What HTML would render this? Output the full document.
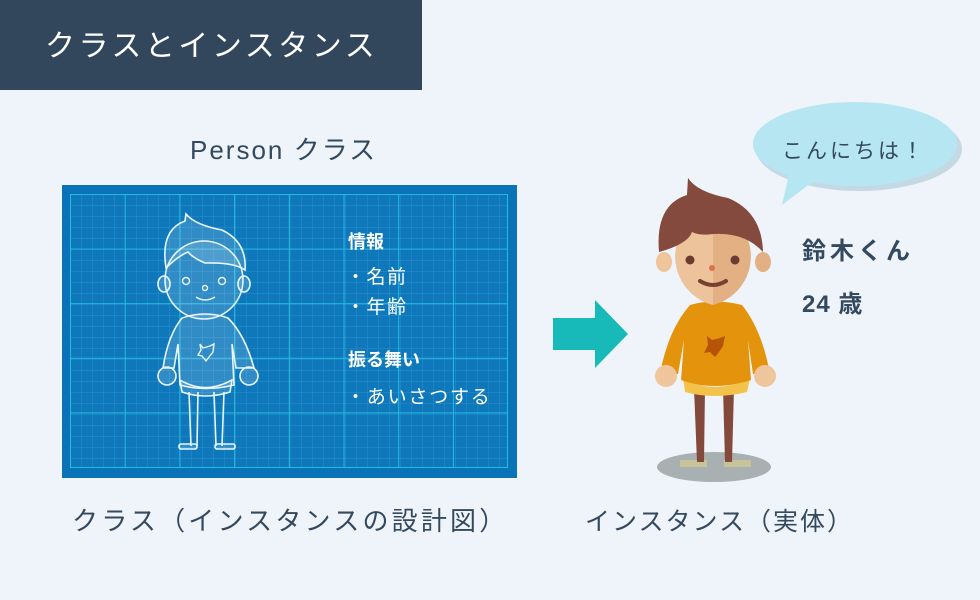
<!DOCTYPE html>
<html><head><meta charset="utf-8"><style>
body{margin:0;width:980px;height:600px;background:#eff4fb;overflow:hidden;font-family:"Liberation Sans","Noto Sans CJK JP",sans-serif;}
</style></head><body>
<svg width="980" height="600" xmlns="http://www.w3.org/2000/svg" style="position:absolute;left:0;top:0">
<defs>
<pattern id="minor" x="70" y="194" width="11" height="11" patternUnits="userSpaceOnUse"><path d="M0 0V11M0 0H11" stroke="#2a8fcf" stroke-width="1" fill="none"/></pattern>
<pattern id="major" x="70" y="194" width="54.7" height="54.6" patternUnits="userSpaceOnUse"><path d="M0.5 0V55M0 0.5H55" stroke="#22bde0" stroke-width="1" fill="none"/></pattern>
</defs>
<rect x="0" y="0" width="422" height="90" fill="#33475c"/>
<text x="45" y="56" fill="#fff" font-size="30" letter-spacing="3.5" font-family="Liberation Sans,Noto Sans CJK JP,sans-serif">クラスとインスタンス</text>
<text x="190" y="159" fill="#34495e" font-size="26" letter-spacing="2" font-family="Liberation Sans,Noto Sans CJK JP,sans-serif">Person クラス</text>
<rect x="62" y="185" width="455" height="293" fill="#0a72b6"/>
<rect x="70" y="194" width="438" height="273" fill="#0e78bb"/>
<rect x="70" y="194" width="438" height="273" fill="url(#minor)"/>
<rect x="70" y="194" width="438" height="273" fill="url(#major)"/>
<rect x="70.5" y="194.5" width="437" height="273" fill="none" stroke="#22bde0"/>
<g stroke="#e8f6ff" stroke-width="1.6" fill="rgba(255,255,255,0.15)">
<line x1="189" y1="392" x2="191" y2="446"/><line x1="198" y1="392" x2="197" y2="446"/>
<line x1="214" y1="392" x2="216" y2="446"/><line x1="224" y1="392" x2="222" y2="446"/>
<rect x="179" y="444" width="18" height="5" rx="2"/><rect x="215" y="444" width="20" height="5" rx="2"/>
<path d="M180 380 Q205 395 232 380 L230 392 Q205 400 182 392Z"/>
<path d="M182 318 Q205 310 228 318 Q245 335 254 368 L236 368 L232 344 L234 385 Q205 392 180 385 L178 344 L174 368 L163 368 Q168 335 182 318Z"/>
<circle cx="167" cy="376" r="9"/><circle cx="249" cy="376" r="9"/>
<ellipse cx="164" cy="284" rx="6" ry="8"/><ellipse cx="244" cy="284" rx="6" ry="8"/>
<circle cx="204" cy="280" r="39"/>
<path d="M166 268 Q160 230 185 221 L186 214 Q195 225 222 230 Q247 242 245 270 Q234 262 205 263 Q193 258 188 252 Q178 256 166 268Z"/>
</g>
<g stroke="#e8f6ff" stroke-width="1.4" fill="none">
<circle cx="186" cy="281" r="3.5"/><circle cx="222" cy="281" r="3.5"/><circle cx="205" cy="288" r="2.5"/>
<path d="M196 297 Q205 303 215 297"/>
<path d="M200 344 L203 348 L210 346 L214 344 L213 352 L209 357 L206 361 L202 356 L198 355 L201 350Z"/>
</g>
<g fill="#fff" font-family="Liberation Sans,Noto Sans CJK JP,sans-serif">
<text x="348" y="248" font-size="18" font-weight="bold">情報</text>
<text x="346" y="283" font-size="19" letter-spacing="1.5">・名前</text>
<text x="346" y="313" font-size="19" letter-spacing="1.5">・年齢</text>
<text x="348" y="366" font-size="18" font-weight="bold">振る舞い</text>
<text x="346" y="403" font-size="19" letter-spacing="1.8">・あいさつする</text>
</g>
<path d="M553 318H595V300L628 334L595 368V350H553Z" fill="#17b9b9"/>
<ellipse cx="857" cy="146" rx="103" ry="42" fill="#a9c7d3" transform="translate(2,3)" opacity="0.6"/>
<path d="M782 205 L790 170 L815 180Z" fill="#b7e6f3"/>
<ellipse cx="855" cy="144" rx="102" ry="42" fill="#b7e6f3"/>
<text x="782" y="158" fill="#34495e" font-size="21" letter-spacing="3" font-family="Liberation Sans,Noto Sans CJK JP,sans-serif">こんにちは！</text>
<text x="802" y="259" fill="#34495e" font-size="24" font-weight="bold" letter-spacing="4" font-family="Liberation Sans,Noto Sans CJK JP,sans-serif">鈴木くん</text>
<text x="802" y="312" fill="#34495e" font-size="24" font-weight="bold" letter-spacing="1" font-family="Liberation Sans,Noto Sans CJK JP,sans-serif">24 歳</text>
<ellipse cx="714" cy="467" rx="57" ry="15" fill="#a9b0b1"/>
<rect x="680" y="460" width="27" height="7" fill="#c7c49a"/><rect x="724" y="460" width="27" height="7" fill="#c7c49a"/>
<path d="M694 388H705L704 462H697Z" fill="#83493a"/><path d="M723 388H734L732 462H725Z" fill="#83493a"/>
<path d="M683 378 Q714 396 750 378 L747 392 Q714 400 685 392Z" fill="#f3c24a"/>
<path d="M690 305 Q714 298 742 305 Q762 330 770 374 L753 374 L748 340 L751 380 Q714 392 681 380 L684 340 L678 374 L660 374 Q668 330 690 305Z" fill="#e4930c"/>
<path d="M707 336 L712 340 L720 338 L725 336 L723 346 L719 352 L715 357 L710 352 L704 353 L708 345Z" fill="#b65307"/>
<circle cx="666" cy="376" r="11" fill="#efc59b"/><circle cx="765" cy="376" r="11" fill="#efc59b"/>
<ellipse cx="664" cy="262" rx="8" ry="10" fill="#efc59b"/><ellipse cx="763" cy="262" rx="8" ry="10" fill="#e2b083"/>
<path d="M713 208 A50 50 0 0 0 713 305Z" fill="#ecc39a"/>
<path d="M713 208 A50 50 0 0 1 713 305Z" fill="#e2b083"/>
<path d="M659 252 Q655 205 687 195 L688 178 Q697 192 728 198 Q762 212 763 252 Q745 232 713 234 Q700 236 692 232 Q688 244 659 252Z" fill="#834a3d"/>
<circle cx="690" cy="260" r="4.5" fill="#6b3b30"/><circle cx="735" cy="260" r="4.5" fill="#6b3b30"/>
<circle cx="712" cy="268" r="3" fill="#e0704d"/>
<path d="M700 281 Q713 289 726 281" stroke="#7a3f33" stroke-width="4" fill="none" stroke-linecap="round"/>
<text x="72" y="530" fill="#34495e" font-size="26" letter-spacing="3.2" font-family="Liberation Sans,Noto Sans CJK JP,sans-serif">クラス（インスタンスの設計図）</text>
<text x="585" y="530" fill="#34495e" font-size="25" letter-spacing="2" font-family="Liberation Sans,Noto Sans CJK JP,sans-serif">インスタンス（実体）</text>
</svg>
</body></html>
